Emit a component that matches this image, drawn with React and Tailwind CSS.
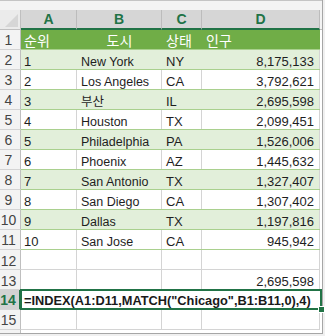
const data = [
  ["1", "New York", "NY", "8,175,133"],
  ["2", "Los Angeles", "CA", "3,792,621"],
  ["3", "부산", "IL", "2,695,598"],
  ["4", "Houston", "TX", "2,099,451"],
  ["5", "Philadelphia", "PA", "1,526,006"],
  ["6", "Phoenix", "AZ", "1,445,632"],
  ["7", "San Antonio", "TX", "1,327,407"],
  ["8", "San Diego", "CA", "1,307,402"],
  ["9", "Dallas", "TX", "1,197,816"],
  ["10", "San Jose", "CA", "945,942"],
];

const font = "font-['Liberation_Sans','Noto_Sans_CJK_KR',sans-serif]";

function RowHead({ n, selected }) {
  return (
    <div
      className={
        "w-[21px] shrink-0 flex items-center justify-center pr-[3px] pt-[2px] text-[14px] border-b border-[#d4d4d4] " +
        (selected
          ? "bg-[#d2d2d2] text-[#217346] font-bold border-r-2 border-r-[#217346]"
          : "bg-[#f3f3f3] text-[#444] border-r border-r-[#bfbfbf]")
      }
    >
      {n}
    </div>
  );
}

function Edge() {
  return <div className="w-[2px] shrink-0 h-full bg-white" />;
}

export default function App() {
  return (
    <div className={"w-[325px] h-[336px] bg-[#f0f0f0] overflow-hidden " + font}>
      <div className="w-[323px] border-r border-b border-[#a6a6a6] bg-white">
        {/* top strip */}
        <div className="h-[10px] bg-[#f3f3f3] border-t border-[#c4c4c4]" />

        {/* column headers */}
        <div className="flex h-5 text-[14px] font-bold text-[#217346]">
          <div className="w-[21px] shrink-0 bg-[#ebebeb] border-r border-b border-[#bfbfbf] relative">
            <div className="absolute right-[2px] bottom-[2px] w-0 h-0 border-l-[13px] border-l-transparent border-b-[13px] border-b-[#d6d6d6]" />
          </div>
          <div className="w-[56px] shrink-0 bg-[#d6d6d6] border-r border-r-[#bcbcbc] border-b-2 border-b-[#217346] flex items-center justify-center">A</div>
          <div className="w-[85px] shrink-0 bg-[#d6d6d6] border-r border-r-[#bcbcbc] border-b-2 border-b-[#217346] flex items-center justify-center">B</div>
          <div className="w-[40px] shrink-0 bg-[#d6d6d6] border-r border-r-[#bcbcbc] border-b-2 border-b-[#217346] flex items-center justify-center">C</div>
          <div className="w-[118px] shrink-0 bg-[#d6d6d6] border-r border-r-[#bcbcbc] border-b-2 border-b-[#217346] flex items-center justify-center">D</div>
          <div className="w-[2px] shrink-0 bg-[#f3f3f3] border-b border-[#bfbfbf]" />
        </div>

        {/* row 1: table header */}
        <div className="flex h-5">
          <RowHead n="1" />
          <div className="flex w-[299px] bg-[#70ad47] text-white text-[14px] border-b border-[#a9d08e] font-['Noto_Sans_CJK_KR',sans-serif] leading-none">
            <div className="w-[56px] pl-[3px] flex items-center">순위</div>
            <div className="w-[85px] flex items-center justify-center">도시</div>
            <div className="w-[40px] pl-[4px] flex items-center">상태</div>
            <div className="w-[118px] pl-[4px] flex items-center">인구</div>
          </div>
          <Edge />
        </div>

        {/* data rows */}
        {data.map((r, i) => {
          const band = i % 2 === 0;
          const v = band ? "" : "border-r border-r-[#d4d4d4]";
          return (
            <div key={r[0]} className="flex h-5">
              <RowHead n={String(i + 2)} />
              <div
                className={
                  "flex w-[299px] text-[13px] leading-none text-[#1e1e1e] border-b border-[#a9d08e] " +
                  (band ? "bg-[#e2efda]" : "bg-white")
                }
              >
                <div className={"w-[56px] pl-[3px] flex items-end pb-[1px] " + v}>{r[0]}</div>
                <div className={"w-[85px] pl-[4px] flex items-end pb-[1px] text-[12.5px] " + v}>{r[1]}</div>
                <div className={"w-[40px] pl-[4px] flex items-end pb-[1px] " + v}>{r[2]}</div>
                <div className="w-[118px] pr-[5px] flex items-end justify-end pb-[1px] border-r border-r-[#d4d4d4]">{r[3]}</div>
              </div>
              <Edge />
            </div>
          );
        })}

        {/* rows 12, 13 */}
        {["12", "13"].map((n) => (
          <div key={n} className="flex h-5 text-[13px] leading-none text-[#1e1e1e]">
            <RowHead n={n} />
            <div className="w-[56px] border-r border-b border-[#d4d4d4]" />
            <div className="w-[85px] border-r border-b border-[#d4d4d4]" />
            <div className="w-[40px] border-r border-b border-[#d4d4d4]" />
            <div className="w-[118px] pr-[5px] flex items-end justify-end pb-[1px] border-r border-b border-[#d4d4d4]">
              {n === "13" ? "2,695,598" : ""}
            </div>
            <Edge />
          </div>
        ))}

        {/* row 14: selected, formula overflow */}
        <div className="flex h-5">
          <RowHead n="14" selected />
          <div className="relative w-[299px] border-b border-[#d4d4d4] flex items-end pb-[1px] pl-[3px] text-[12.8px] leading-none font-bold text-[#1a1a1a] whitespace-nowrap">
            =INDEX(A1:D11,MATCH("Chicago",B1:B11,0),4)
            <div className="absolute top-[-1px] bottom-[-1px] left-[-1px] right-[-2px] border-2 border-[#217346]" />
            <div className="absolute right-[-5px] bottom-[-4px] w-[7px] h-[7px] bg-[#217346] border border-white" />
          </div>
          <Edge />
        </div>

        {/* row 15 */}
        <div className="flex h-5">
          <RowHead n="15" />
          <div className="w-[56px] border-r border-b border-[#d4d4d4]" />
          <div className="w-[85px] border-r border-b border-[#d4d4d4]" />
          <div className="w-[40px] border-r border-b border-[#d4d4d4]" />
          <div className="w-[118px] border-r border-b border-[#d4d4d4]" />
          <Edge />
        </div>

        <div className="flex h-[3px]">
          <div className="w-[21px] bg-[#f3f3f3] border-r border-[#bfbfbf]" />
          <div className="flex-1 bg-white" />
        </div>
      </div>
    </div>
  );
}
